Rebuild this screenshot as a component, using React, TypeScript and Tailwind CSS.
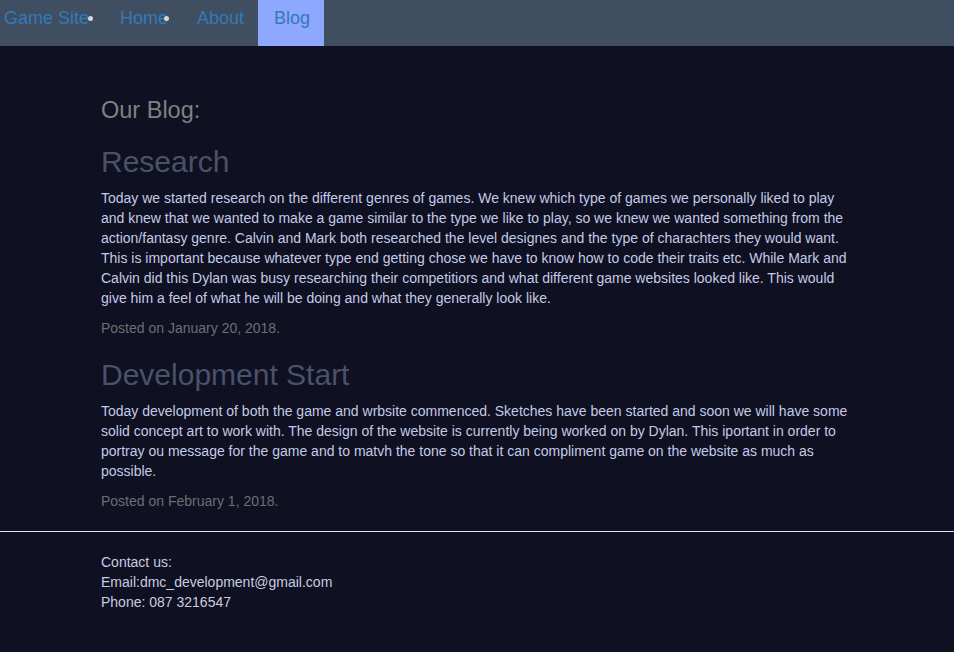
import React from 'react';

const posts = [
  {
    title: 'Research',
    body: 'Today we started research on the different genres of games. We knew which type of games we personally liked to play and knew that we wanted to make a game similar to the type we like to play, so we knew we wanted something from the action/fantasy genre. Calvin and Mark both researched the level designes and the type of charachters they would want. This is important because whatever type end getting chose we have to know how to code their traits etc. While Mark and Calvin did this Dylan was busy researching their competitiors and what different game websites looked like. This would give him a feel of what he will be doing and what they generally look like.',
    date: 'Posted on January 20, 2018.',
  },
  {
    title: 'Development Start',
    body: 'Today development of both the game and wrbsite commenced. Sketches have been started and soon we will have some solid concept art to work with. The design of the website is currently being worked on by Dylan. This iportant in order to portray ou message for the game and to matvh the tone so that it can compliment game on the website as much as possible.',
    date: 'Posted on February 1, 2018.',
  },
];

const Dot = () => <span className="absolute right-[-3px] top-[16px] w-[5px] h-[5px] rounded-full bg-[#d4d6e0]" />;

export default function App() {
  return (
    <div className="min-h-[652px] bg-[#0f1021] font-['Liberation_Sans',Arial,sans-serif]">
      {/* nav */}
      <nav className="h-[46px] bg-[#404e62] flex items-stretch text-[18px] text-[#337ab7]">
        <a className="relative pl-[4px] w-[90px] leading-[37px]">
          Game Site
          <Dot />
        </a>
        <a className="relative ml-[30px] w-[46px] leading-[37px]">
          Home
          <Dot />
        </a>
        <a className="ml-[31px] w-[61px] leading-[37px]">About</a>
        <a className="w-[66px] pl-[16px] leading-[37px] bg-[#8ea8ff]">Blog</a>
      </nav>

      <main className="w-[752px] ml-[101px] pt-[51px]">
        <h3 className="text-[23.5px] leading-[26px] text-[#808080]">Our Blog:</h3>
        {posts.map((p, i) => (
          <section key={p.title}>
            <h2 className={(i === 0 ? 'mt-[22px]' : 'mt-[20px]') + ' mb-[10px] text-[30px] leading-[33px] text-[#4b5169]'}>
              {p.title}
            </h2>
            <p className="text-[14px] leading-[20px] text-[#c4cbe6]">{p.body}</p>
            <p className="mt-[10px] text-[14px] leading-[20px] text-[#6e6e72]">{p.date}</p>
          </section>
        ))}
      </main>

      <hr className="mt-[20px] border-0 border-t border-[#e6e6ea]" />

      <footer className="w-[752px] ml-[101px] pt-[20px] text-[14px] leading-[20px] text-[#c8cce2]">
        <div>Contact us:</div>
        <div>Email:dmc_development@gmail.com</div>
        <div>Phone: 087 3216547</div>
      </footer>
    </div>
  );
}
